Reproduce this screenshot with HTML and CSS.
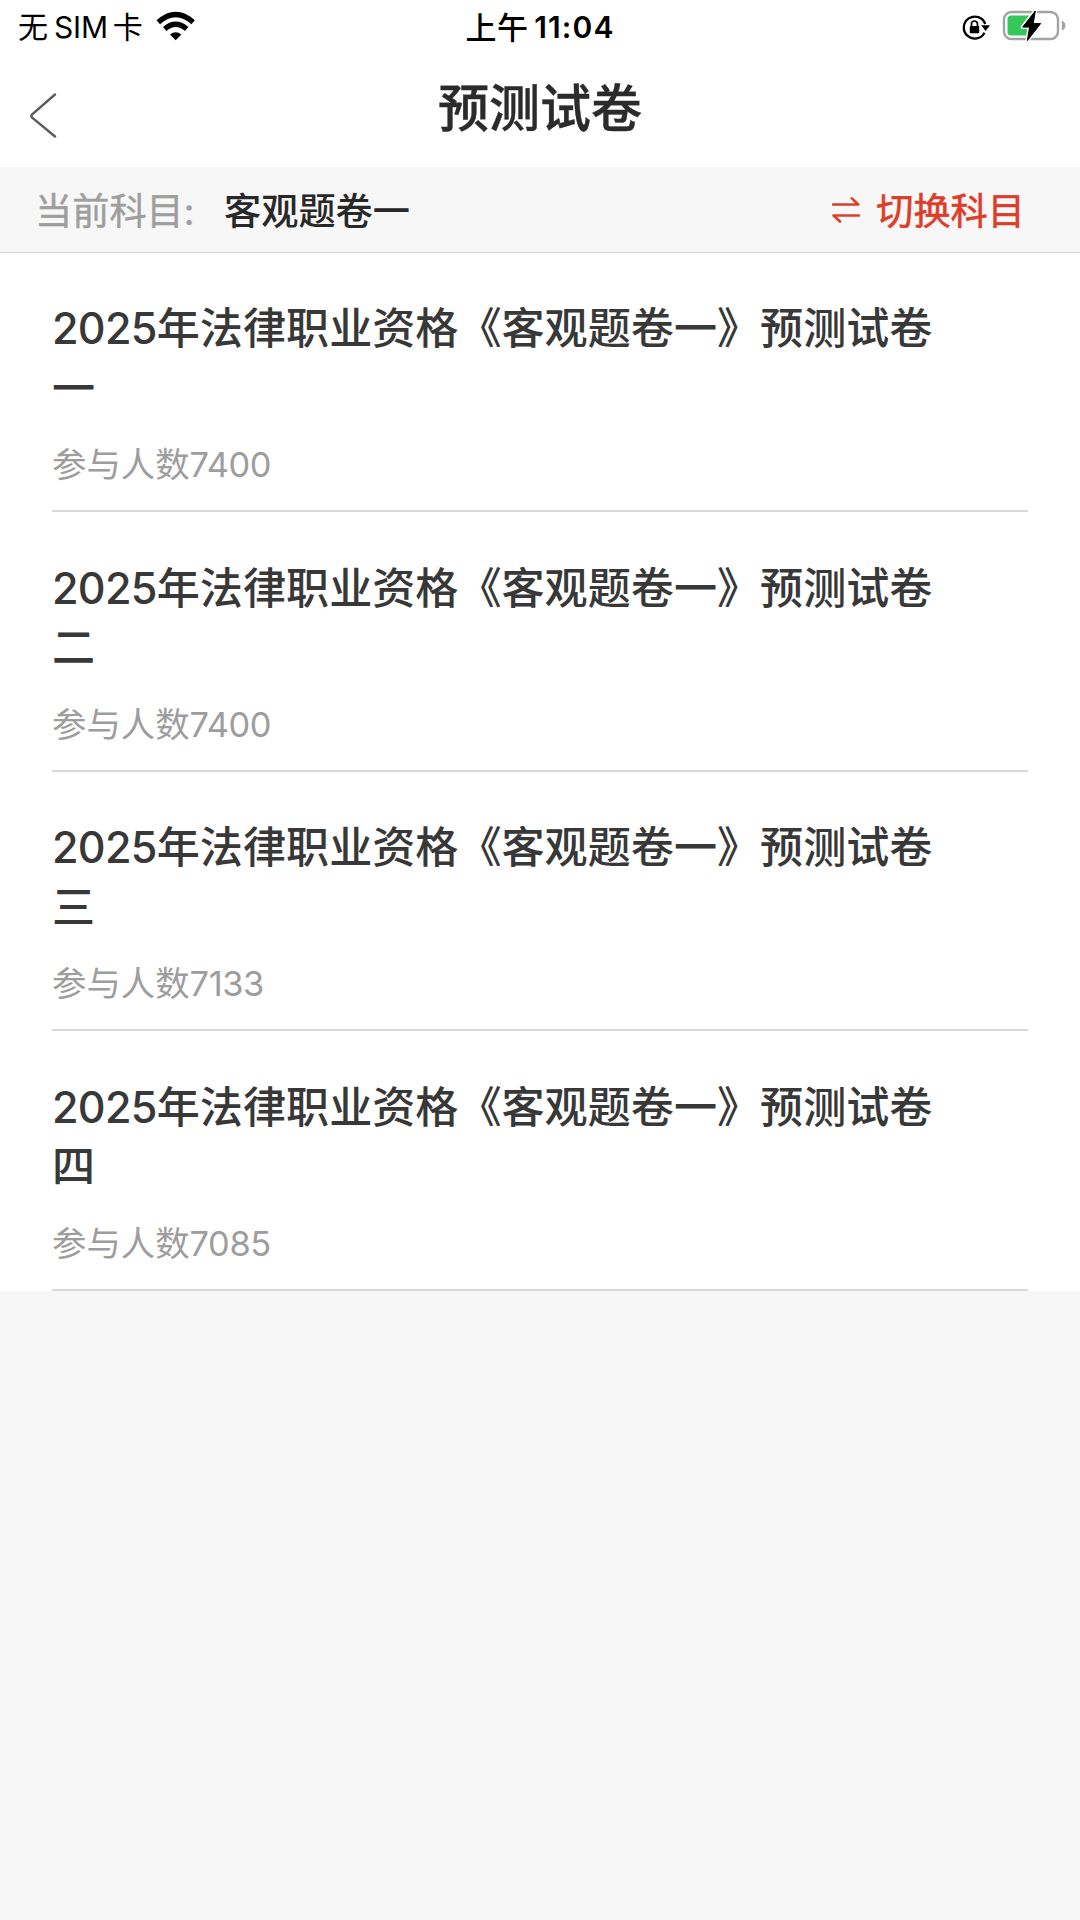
FILE: index.html
```html
<!DOCTYPE html>
<html lang="zh-CN">
<head>
<meta charset="utf-8">
<title>预测试卷</title>
<link rel="stylesheet" href="styles.css">
</head>
<body>
<header class="status">
  <div class="carrier"><span>无</span><span class="sim">SIM</span><span>卡</span>
    <svg class="wifi" width="40" height="30" viewBox="0 0 40 30"><g fill="none" stroke="#000" stroke-width="5.2"><path d="M2.3 11.2Q19.7 -4.2 37.1 11.2"/><path d="M8.7 18Q19.7 8.5 30.7 18"/></g><path d="M19.7 29.2L14 23.5Q19.7 18.8 25.4 23.5Z"/></svg>
  </div>
  <div class="clock"><span class="half">上午</span><span class="time">11:04</span></div>
  <div class="indicators">
    <svg class="lock" width="28" height="28" viewBox="0 0 28 28"><path d="M22.5 18.8A11 11 0 1 1 23.2 10" fill="none" stroke="#000" stroke-width="2.3"/><path d="M19.2 11.2H28L23.6 17Z"/><rect x="7.8" y="12" width="9.4" height="7.3" rx="1"/><path d="M9.5 12.5V10a3 3 0 0 1 6 0v2.5" fill="none" stroke="#000" stroke-width="1.7"/></svg>
    <svg class="battery" width="66" height="34" viewBox="0 0 66 34"><rect x="2" y="3" width="54" height="27" rx="7.5" fill="none" stroke="#a3a3a3" stroke-width="2.4"/><path d="M59.8 11.5Q63.4 13 63.4 16.5T59.8 21.5Z" fill="#a3a3a3"/><path d="M9 6.5H28V26.5H9Q5.5 26.5 5.5 23V10Q5.5 6.5 9 6.5Z" fill="#35c759"/><path d="M33.3 2L20.7 18.1H27.6L25.4 31.5L38.6 14.6H31.2Z" fill="#000" stroke="#fff" stroke-width="4" stroke-linejoin="round" paint-order="stroke"/><path d="M33.3 2L20.7 18.1H27.6L25.4 31.5L38.6 14.6H31.2Z" stroke="#000" stroke-width="1" stroke-linejoin="round"/></svg>
  </div>
</header>
<nav class="nav">
  <svg class="back" width="32" height="48" viewBox="0 0 32 48"><path d="M26 2.5L3.2 22.3Q1.5 24 3.2 25.7L26 44.5" fill="none" stroke="#5b5b5b" stroke-width="2.4" stroke-linecap="round"/></svg>
  <h1>预测试卷</h1>
</nav>
<section class="subject">
  <span class="label">当前科目<span class="colon">:</span></span>
  <span class="name">客观题卷一</span>
  <span class="switch"><svg width="28" height="28" viewBox="0 0 28 28"><g fill="none" stroke="#dc3e2b" stroke-width="2.6" stroke-linecap="round" stroke-linejoin="round"><path d="M1 8.5H26.3L19.8 2.4"/><path d="M27 19.5H1.5L8 25.5"/></g></svg><span>切换科目</span></span>
</section>
<main class="list">
  <article class="paper"><h2><span class="year">2025</span>年法律职业资格《客观题卷一》预测试卷一</h2><p>参与人数<span class="count">7400</span></p></article>
  <article class="paper"><h2><span class="year">2025</span>年法律职业资格《客观题卷一》预测试卷二</h2><p>参与人数<span class="count">7400</span></p></article>
  <article class="paper"><h2><span class="year">2025</span>年法律职业资格《客观题卷一》预测试卷三</h2><p>参与人数<span class="count">7133</span></p></article>
  <article class="paper"><h2><span class="year">2025</span>年法律职业资格《客观题卷一》预测试卷四</h2><p>参与人数<span class="count">7085</span></p></article>
</main>
</body>
</html>
```
FILE: styles.css
```css
* { box-sizing: border-box; }
body {
  margin: 0;
  height: 1920px;
  background: #f7f7f7;
  color: #383838;
  font-family: Inter, "Noto Sans CJK SC", sans-serif;
}
svg { display: block; flex: none; }
h1, h2, p { margin: 0; }
.status {
  display: grid;
  grid-template-columns: 1fr auto 1fr;
  height: 55px;
  padding: 0 12px 0 18px;
  background: #fff;
  color: #000;
  font-size: 30px;
  line-height: 55px;
}
.carrier, .clock, .indicators { display: flex; }
.sim { margin: 0 5px 0 6px; letter-spacing: -.2px; }
.wifi { margin: 11px 0 0 13px; }
.clock { margin-right: 6px; font-weight: 500; }
.half { font-size: 31px; letter-spacing: .4px; }
.time { margin-left: 6px; font-weight: 600; letter-spacing: 1.1px; }
.indicators { justify-content: flex-end; }
.lock { margin: 14px 12px 0 0; }
.battery { margin-top: 9px; }
.nav {
  display: grid;
  grid-template-columns: 58px 1fr 58px;
  height: 112px;
  padding-top: 16px;
  background: #fff;
}
.back { margin: 21px 0 0 29px; }
.nav h1 {
  color: #2b2b2b;
  font-size: 51px;
  font-weight: 500;
  line-height: 76px;
  text-align: center;
  -webkit-text-stroke: .4px #2b2b2b;
}
.subject {
  display: flex;
  height: 86px;
  padding: 0 55px 0 35px;
  border-bottom: 1px solid #d6d6d6;
  font-size: 37.2px;
  line-height: 89px;
}
.label {
  width: 189px;
  color: #9e9e9e;
  -webkit-text-stroke: .4px #9e9e9e;
}
.name { color: #282828; font-weight: 500; }
.switch {
  display: flex;
  margin-left: auto;
  color: #dc3e2b;
  -webkit-text-stroke: .6px #dc3e2b;
}
.switch svg { margin: 29px 16px 0 0; }
.list { background: #fff; }
.paper {
  height: 259.5px;
  margin: 0 52px;
  padding-top: 46.5px;
  border-bottom: 2px solid #d8d8d8;
}
.paper:first-child { height: 259px; padding-top: 46px; }
.paper h2 {
  width: 890px;
  font-size: 43.1px;
  font-weight: 500;
  line-height: 59.5px;
}
.year { font-weight: 450; letter-spacing: -.7px; }
.paper p {
  margin-top: 22px;
  color: #9d9d9d;
  font-size: 34.4px;
  line-height: 50px;
}
.count { letter-spacing: -.4px; }
```
